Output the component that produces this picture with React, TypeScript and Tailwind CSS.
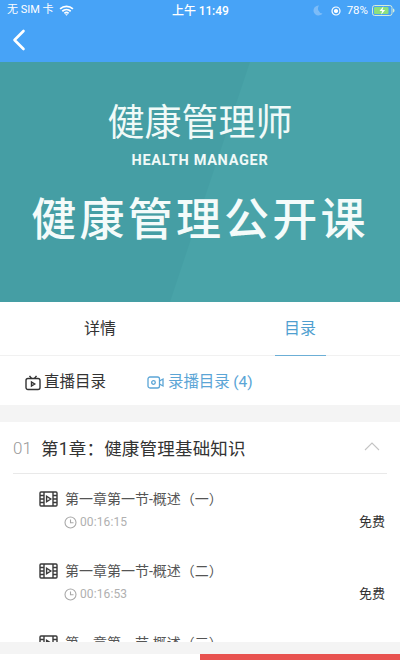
const CJK = "font-['Roboto','Noto_Sans_CJK_SC',sans-serif]";

function Wifi() {
  return (
    <svg width="15" height="11" viewBox="0 0 16 12" fill="none" stroke="white" strokeWidth="1.9" strokeLinecap="butt">
      <path d="M1 4.2C5 .6 11 .6 15 4.2" />
      <path d="M3.4 6.8C6 4.6 10 4.6 12.6 6.8" />
      <path d="M5.7 9.1C7 8 9 8 10.3 9.1" />
      <path d="M8 11.8L6.4 10h3.2z" fill="white" stroke="none" />
    </svg>
  );
}

function Film() {
  return (
    <svg width="19" height="16" viewBox="0 0 19 16" fill="none" stroke="#3a3a3a" strokeWidth="1.4">
      <rect x="1" y="1" width="17" height="14" rx="1" />
      <path d="M5 1v14M14 1v14M1 4.5h4M1 8h4M1 11.5h4M14 4.5h4M14 8h4M14 11.5h4" />
      <path d="M7.6 5.2v5.6l4.2-2.8z" />
    </svg>
  );
}

function Clock() {
  return (
    <svg width="13" height="13" viewBox="0 0 13 13" fill="none" stroke="#a8a8a8" strokeWidth="1.1">
      <circle cx="6.5" cy="6.5" r="5.5" />
      <path d="M6.5 3.4v3.4h3" />
    </svg>
  );
}

function Lesson({ title, time }: { title: string; time?: string }) {
  return (
    <div className="flex items-start h-[72px] pl-[39px] pr-[15px]">
      <div className="flex-1">
        <div className="flex items-center gap-[7px] h-[20px]">
          <Film />
          <span className="text-[14px] text-[#555]">{title}</span>
        </div>
        {time && (
          <div className="flex items-center gap-[3px] mt-[5px] pl-[25px] h-[16px]">
            <Clock />
            <span className="text-[12px] text-[#b0b0b0] tracking-[0.1px]">{time}</span>
          </div>
        )}
      </div>
      {time && <span className="text-[13px] text-[#333] mt-[23px]">免费</span>}
    </div>
  );
}

export default function App() {
  return (
    <div className={`w-[400px] h-[660px] flex flex-col overflow-hidden bg-white ${CJK}`}>
      <div className="h-[62px] bg-[#47a3f7] shrink-0 text-white">
        <div className="relative flex items-center justify-between h-[20px] pt-[1px] pl-[7px] pr-[5px]">
          <div className="flex items-center gap-[5px] text-[11px]">
            <span>无 SIM 卡</span>
            <Wifi />
          </div>
          <span className="absolute left-[172px] text-[12px] font-medium tracking-[-0.1px]">上午 11:49</span>
          <div className="flex items-center gap-[4px] text-[11.5px]">
            <svg width="10" height="11" viewBox="0 0 10 11" fill="#7cbcf8">
              <path d="M6 .5A5 5 0 1 0 9.5 8.5 5 5 0 0 1 6 .5z" />
            </svg>
            <svg width="10" height="10" viewBox="0 0 10 10" fill="none" stroke="white" strokeWidth="1.2" className="ml-[4px]">
              <circle cx="5" cy="5" r="4" />
              <circle cx="5" cy="5" r="1.5" fill="white" />
            </svg>
            <span className="ml-[2px]">78%</span>
            <svg width="23" height="11" viewBox="0 0 23 11">
              <rect x=".5" y=".5" width="19.5" height="10" rx="2.2" fill="none" stroke="#d8ecd8" />
              <rect x="2" y="2" width="14.5" height="7" rx="1" fill="#8ee07e" />
              <path d="M21 3.5c1 .3 1.5 1 1.5 2s-.5 1.7-1.5 2z" fill="#d8ecd8" />
              <path d="M11.5 1.2L7.5 6h2.6l-1 3.8 4-4.9h-2.6z" fill="#fff" />
            </svg>
          </div>
        </div>
        <div className="pl-[12px] pt-[9px]">
          <svg width="14" height="22" viewBox="0 0 14 22" fill="none" stroke="white" strokeWidth="2.6" strokeLinecap="round" strokeLinejoin="round">
            <path d="M11.5 2L2.5 11l9 9" />
          </svg>
        </div>
      </div>

      <div className="relative h-[240px] shrink-0 bg-[#459ea4] overflow-hidden flex flex-col items-center text-[#f0faf8]">
        <svg className="absolute inset-0" width="400" height="240" viewBox="0 0 400 240">
          <polygon points="250,0 400,0 400,240 170,240" fill="#49a3a8" />
        </svg>
        <div className="relative mt-[39px] h-[46px] text-[37px] leading-[46px] font-normal whitespace-nowrap">健康管理师</div>
        <div className="relative mt-[5px] h-[18px] text-[14.5px] leading-[18px] font-bold tracking-[0.7px] font-['Roboto',sans-serif]">HEALTH MANAGER</div>
        <div className="relative mt-[22px] h-[58px] text-[45px] leading-[58px] font-medium tracking-[3.2px] text-[#f4fbfa] whitespace-nowrap">健康管理公开课</div>
      </div>

      <div className="flex h-[54px] shrink-0 border-b border-[#f1f1f1] text-[16px]">
        <div className="flex-1 flex items-center justify-center text-[#333]">详情</div>
        <div className="flex-1 flex justify-center">
          <div className="w-[51px] h-[54px] flex items-center justify-center text-[#4f9fd0] border-b-[1.5px] border-[#6cafd6]">目录</div>
        </div>
      </div>

      <div className="flex items-center h-[49px] shrink-0 pl-[25px] pt-[4px] text-[15.5px]">
        <div className="flex items-center gap-[3px] text-[#333]">
          <svg width="16" height="16" viewBox="0 0 16 16" fill="none" stroke="#333" strokeWidth="1.4">
            <rect x="1" y="3.5" width="14" height="11" rx="2" />
            <path d="M4.5 .8L6.5 3.5M11.5 .8L9.5 3.5" />
            <path d="M6.5 7v4l3.2-2z" />
          </svg>
          <span>直播目录</span>
        </div>
        <div className="flex items-center gap-[4px] ml-[41px] text-[#5ba5d6]">
          <svg width="17" height="13" viewBox="0 0 17 13" fill="none" stroke="#5ba5d6" strokeWidth="1.3">
            <rect x="1" y="1" width="11.5" height="11" rx="2" />
            <circle cx="6.5" cy="6.5" r="1.8" />
            <path d="M12.5 5l3.5-2v7l-3.5-2" />
          </svg>
          <span className="tracking-[-0.1px]">录播目录 (4)</span>
        </div>
      </div>

      <div className="h-[17px] shrink-0 bg-[#f4f4f4]" />

      <div className="flex-1 min-h-0 overflow-hidden">
        <div className="flex items-center h-[52px] mx-[13px] pt-[3px] border-b border-[#e9e9e9]">
          <span className="text-[17px] font-light text-[#999] w-[28px]">01</span>
          <span className="flex-1 text-[17.5px] tracking-[0.2px] text-[#333]">第1章：健康管理基础知识</span>
          <svg width="16" height="9" viewBox="0 0 16 9" fill="none" stroke="#c4c4c4" strokeWidth="1.1" className="mr-[7px] mb-[6px]">
            <path d="M1 8l7-7 7 7" />
          </svg>
        </div>
        <div className="pt-[15px]">
          <Lesson title="第一章第一节-概述（一）" time="00:16:15" />
          <Lesson title="第一章第一节-概述（二）" time="00:16:53" />
          <Lesson title="第一章第一节-概述（三）" />
        </div>
      </div>

      <div className="h-[12px] shrink-0 bg-[#f4f4f4]" />
      <div className="flex h-[6px] shrink-0">
        <div className="flex-1 bg-white" />
        <div className="flex-1 bg-[#e8524f]" />
      </div>
    </div>
  );
}
